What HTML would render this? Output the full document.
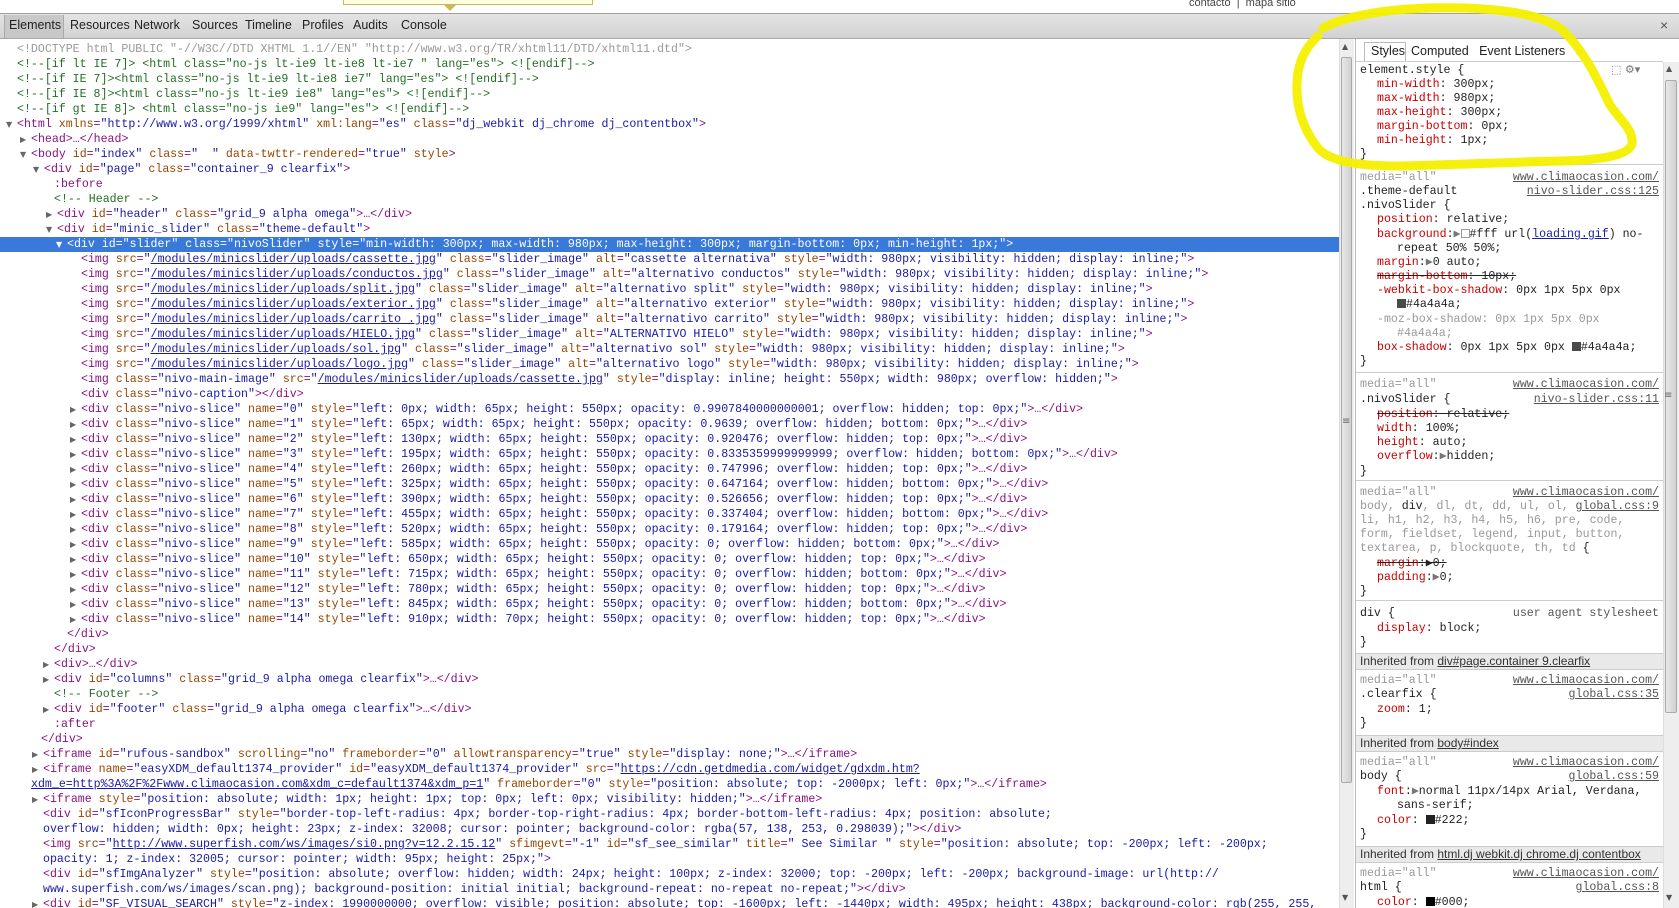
<!DOCTYPE html>
<html><head><meta charset="utf-8"><style>
*{margin:0;padding:0;box-sizing:border-box}
body{width:1679px;height:908px;overflow:hidden;background:#fff;position:relative;font-family:"Liberation Mono",monospace;font-size:11.6px;color:#222}
.abs{position:absolute}
.ln{position:absolute;white-space:pre;height:15px;line-height:15px}
.t{color:#881280}.a{color:#994500}.v{color:#1a1aa6}.c{color:#236e25}.g{color:#999}
.l{color:#1a1aa6;text-decoration:underline}
.ar{position:absolute;left:-11px;top:0;font-size:8px;color:#666;font-family:"DejaVu Sans",sans-serif}
.sel{background:#3879d9;color:#fff}
.sel span{color:#fff}
.tab{position:absolute;top:18px;font-family:"Liberation Sans",sans-serif;font-size:12.5px;color:#222}
#left{position:absolute;left:0;top:39px;width:1339px;height:869px;overflow:hidden}
#right{position:absolute;left:1355px;top:39px;width:308px;height:869px;overflow:hidden;border-left:1px solid #bbb}
.r{position:absolute;white-space:pre;line-height:14px;height:14px}
.p{color:#c80000}
.rl{position:absolute;right:4px;white-space:pre;color:#555;text-decoration:underline;line-height:14px}
.sep{position:absolute;left:0;right:0;height:1px;background:#ccc}
.inh{position:absolute;left:0;right:0;height:17px;background:#e9e9e9;border-top:1px solid #ccc;border-bottom:1px solid #ccc;font-family:"Liberation Sans",sans-serif;font-size:12px;line-height:15px;padding-left:4px;color:#333;white-space:pre}
.inh u{color:#333}
.s{text-decoration:line-through}
</style></head><body>
<div class="abs" style="left:343px;top:-2px;width:250px;height:7px;background:#ffffe0;border:1px solid #c9b95a"></div>
<div class="abs" style="left:444px;top:5px;width:0;height:0;border-left:6px solid transparent;border-right:6px solid transparent;border-top:6px solid #c9b95a"></div>
<div class="abs" style="left:1189px;top:-3px;font-family:'Liberation Sans',sans-serif;font-size:11px;color:#444;white-space:pre">contacto  |  mapa sitio</div>
<div class="abs" style="left:0;top:13px;width:1679px;height:26px;background:linear-gradient(#e4e4e4,#d2d2d2);border-top:1px solid #a0a0a0;border-bottom:1px solid #a8a8a8"></div>
<div class="abs" style="left:4px;top:15px;width:60px;height:23px;background:#c8c8c8;border-left:1px solid #aaa;border-right:1px solid #aaa"></div>
<div class="tab" style="left:9px">Elements</div>
<div class="tab" style="left:70px">Resources</div>
<div class="tab" style="left:134px">Network</div>
<div class="tab" style="left:192px">Sources</div>
<div class="tab" style="left:245px">Timeline</div>
<div class="tab" style="left:302px">Profiles</div>
<div class="tab" style="left:353px">Audits</div>
<div class="tab" style="left:401px">Console</div>
<div class="abs" style="left:1660px;top:17px;font-family:'Liberation Sans',sans-serif;font-size:14px;color:#555">×</div>

<div id="left">
<div class="ln g" style="left:17px;top:3px">&lt;!DOCTYPE html PUBLIC "-//W3C//DTD XHTML 1.1//EN" "http://www.w3.org/TR/xhtml11/DTD/xhtml11.dtd"&gt;</div>
<div class="ln c" style="left:17px;top:18px">&lt;!--[if lt IE 7]&gt; &lt;html class="no-js lt-ie9 lt-ie8 lt-ie7 " lang="es"&gt; &lt;![endif]--&gt;</div>
<div class="ln c" style="left:17px;top:33px">&lt;!--[if IE 7]&gt;&lt;html class="no-js lt-ie9 lt-ie8 ie7" lang="es"&gt; &lt;![endif]--&gt;</div>
<div class="ln c" style="left:17px;top:48px">&lt;!--[if IE 8]&gt;&lt;html class="no-js lt-ie9 ie8" lang="es"&gt; &lt;![endif]--&gt;</div>
<div class="ln c" style="left:17px;top:63px">&lt;!--[if gt IE 8]&gt; &lt;html class="no-js ie9" lang="es"&gt; &lt;![endif]--&gt;</div>
<div class="ln" style="left:17px;top:78px"><span class="ar">▼</span><span class="t">&lt;html </span><span class="a">xmlns</span><span class="t">=</span><span class="v">"http://www.w3.org/1999/xhtml"</span> <span class="a">xml:lang</span><span class="t">=</span><span class="v">"es"</span> <span class="a">class</span><span class="t">=</span><span class="v">"dj_webkit dj_chrome dj_contentbox"</span><span class="t">&gt;</span></div>
<div class="ln" style="left:31px;top:93px"><span class="ar">▶</span><span class="t">&lt;head&gt;…&lt;/head&gt;</span></div>
<div class="ln" style="left:31px;top:108px"><span class="ar">▼</span><span class="t">&lt;body </span><span class="a">id</span><span class="t">=</span><span class="v">"index"</span> <span class="a">class</span><span class="t">=</span><span class="v">"  "</span> <span class="a">data-twttr-rendered</span><span class="t">=</span><span class="v">"true"</span> <span class="a">style</span><span class="t">&gt;</span></div>
<div class="ln" style="left:44px;top:123px"><span class="ar">▼</span><span class="t">&lt;div </span><span class="a">id</span><span class="t">=</span><span class="v">"page"</span> <span class="a">class</span><span class="t">=</span><span class="v">"container_9 clearfix"</span><span class="t">&gt;</span></div>
<div class="ln t" style="left:54px;top:138px">:before</div>
<div class="ln c" style="left:54px;top:153px">&lt;!-- Header --&gt;</div>
<div class="ln" style="left:57px;top:168px"><span class="ar">▶</span><span class="t">&lt;div </span><span class="a">id</span><span class="t">=</span><span class="v">"header"</span> <span class="a">class</span><span class="t">=</span><span class="v">"grid_9 alpha omega"</span><span class="t">&gt;…&lt;/div&gt;</span></div>
<div class="ln" style="left:57px;top:183px"><span class="ar">▼</span><span class="t">&lt;div </span><span class="a">id</span><span class="t">=</span><span class="v">"minic_slider"</span> <span class="a">class</span><span class="t">=</span><span class="v">"theme-default"</span><span class="t">&gt;</span></div>
<div class="abs sel" style="left:0;top:198px;width:1339px;height:15px"></div>
<div class="ln sel" style="left:67px;top:198px"><span class="ar" style="color:#fff">▼</span>&lt;div id="slider" class="nivoSlider" style="min-width: 300px; max-width: 980px; max-height: 300px; margin-bottom: 0px; min-height: 1px;"&gt;</div>
<div class="ln" style="left:81px;top:213px"><span class="t">&lt;img </span><span class="a">src</span><span class="t">=</span><span class="v">"<span class="l">/modules/minicslider/uploads/cassette.jpg</span>"</span> <span class="a">class</span><span class="t">=</span><span class="v">"slider_image"</span> <span class="a">alt</span><span class="t">=</span><span class="v">"cassette alternativa"</span> <span class="a">style</span><span class="t">=</span><span class="v">"width: 980px; visibility: hidden; display: inline;"</span><span class="t">&gt;</span></div>
<div class="ln" style="left:81px;top:228px"><span class="t">&lt;img </span><span class="a">src</span><span class="t">=</span><span class="v">"<span class="l">/modules/minicslider/uploads/conductos.jpg</span>"</span> <span class="a">class</span><span class="t">=</span><span class="v">"slider_image"</span> <span class="a">alt</span><span class="t">=</span><span class="v">"alternativo conductos"</span> <span class="a">style</span><span class="t">=</span><span class="v">"width: 980px; visibility: hidden; display: inline;"</span><span class="t">&gt;</span></div>
<div class="ln" style="left:81px;top:243px"><span class="t">&lt;img </span><span class="a">src</span><span class="t">=</span><span class="v">"<span class="l">/modules/minicslider/uploads/split.jpg</span>"</span> <span class="a">class</span><span class="t">=</span><span class="v">"slider_image"</span> <span class="a">alt</span><span class="t">=</span><span class="v">"alternativo split"</span> <span class="a">style</span><span class="t">=</span><span class="v">"width: 980px; visibility: hidden; display: inline;"</span><span class="t">&gt;</span></div>
<div class="ln" style="left:81px;top:258px"><span class="t">&lt;img </span><span class="a">src</span><span class="t">=</span><span class="v">"<span class="l">/modules/minicslider/uploads/exterior.jpg</span>"</span> <span class="a">class</span><span class="t">=</span><span class="v">"slider_image"</span> <span class="a">alt</span><span class="t">=</span><span class="v">"alternativo exterior"</span> <span class="a">style</span><span class="t">=</span><span class="v">"width: 980px; visibility: hidden; display: inline;"</span><span class="t">&gt;</span></div>
<div class="ln" style="left:81px;top:273px"><span class="t">&lt;img </span><span class="a">src</span><span class="t">=</span><span class="v">"<span class="l">/modules/minicslider/uploads/carrito .jpg</span>"</span> <span class="a">class</span><span class="t">=</span><span class="v">"slider_image"</span> <span class="a">alt</span><span class="t">=</span><span class="v">"alternativo carrito"</span> <span class="a">style</span><span class="t">=</span><span class="v">"width: 980px; visibility: hidden; display: inline;"</span><span class="t">&gt;</span></div>
<div class="ln" style="left:81px;top:288px"><span class="t">&lt;img </span><span class="a">src</span><span class="t">=</span><span class="v">"<span class="l">/modules/minicslider/uploads/HIELO.jpg</span>"</span> <span class="a">class</span><span class="t">=</span><span class="v">"slider_image"</span> <span class="a">alt</span><span class="t">=</span><span class="v">"ALTERNATIVO HIELO"</span> <span class="a">style</span><span class="t">=</span><span class="v">"width: 980px; visibility: hidden; display: inline;"</span><span class="t">&gt;</span></div>
<div class="ln" style="left:81px;top:303px"><span class="t">&lt;img </span><span class="a">src</span><span class="t">=</span><span class="v">"<span class="l">/modules/minicslider/uploads/sol.jpg</span>"</span> <span class="a">class</span><span class="t">=</span><span class="v">"slider_image"</span> <span class="a">alt</span><span class="t">=</span><span class="v">"alternativo sol"</span> <span class="a">style</span><span class="t">=</span><span class="v">"width: 980px; visibility: hidden; display: inline;"</span><span class="t">&gt;</span></div>
<div class="ln" style="left:81px;top:318px"><span class="t">&lt;img </span><span class="a">src</span><span class="t">=</span><span class="v">"<span class="l">/modules/minicslider/uploads/logo.jpg</span>"</span> <span class="a">class</span><span class="t">=</span><span class="v">"slider_image"</span> <span class="a">alt</span><span class="t">=</span><span class="v">"alternativo logo"</span> <span class="a">style</span><span class="t">=</span><span class="v">"width: 980px; visibility: hidden; display: inline;"</span><span class="t">&gt;</span></div>
<div class="ln" style="left:81px;top:333px"><span class="t">&lt;img </span><span class="a">class</span><span class="t">=</span><span class="v">"nivo-main-image"</span> <span class="a">src</span><span class="t">=</span><span class="v">"<span class="l">/modules/minicslider/uploads/cassette.jpg</span>"</span> <span class="a">style</span><span class="t">=</span><span class="v">"display: inline; height: 550px; width: 980px; overflow: hidden;"</span><span class="t">&gt;</span></div>
<div class="ln" style="left:81px;top:348px"><span class="t">&lt;div </span><span class="a">class</span><span class="t">=</span><span class="v">"nivo-caption"</span><span class="t">&gt;&lt;/div&gt;</span></div>
<div class="ln" style="left:81px;top:363px"><span class="ar">▶</span><span class="t">&lt;div </span><span class="a">class</span><span class="t">=</span><span class="v">"nivo-slice"</span> <span class="a">name</span><span class="t">=</span><span class="v">"0"</span> <span class="a">style</span><span class="t">=</span><span class="v">"left: 0px; width: 65px; height: 550px; opacity: 0.9907840000000001; overflow: hidden; top: 0px;"</span><span class="t">&gt;…&lt;/div&gt;</span></div>
<div class="ln" style="left:81px;top:378px"><span class="ar">▶</span><span class="t">&lt;div </span><span class="a">class</span><span class="t">=</span><span class="v">"nivo-slice"</span> <span class="a">name</span><span class="t">=</span><span class="v">"1"</span> <span class="a">style</span><span class="t">=</span><span class="v">"left: 65px; width: 65px; height: 550px; opacity: 0.9639; overflow: hidden; bottom: 0px;"</span><span class="t">&gt;…&lt;/div&gt;</span></div>
<div class="ln" style="left:81px;top:393px"><span class="ar">▶</span><span class="t">&lt;div </span><span class="a">class</span><span class="t">=</span><span class="v">"nivo-slice"</span> <span class="a">name</span><span class="t">=</span><span class="v">"2"</span> <span class="a">style</span><span class="t">=</span><span class="v">"left: 130px; width: 65px; height: 550px; opacity: 0.920476; overflow: hidden; top: 0px;"</span><span class="t">&gt;…&lt;/div&gt;</span></div>
<div class="ln" style="left:81px;top:408px"><span class="ar">▶</span><span class="t">&lt;div </span><span class="a">class</span><span class="t">=</span><span class="v">"nivo-slice"</span> <span class="a">name</span><span class="t">=</span><span class="v">"3"</span> <span class="a">style</span><span class="t">=</span><span class="v">"left: 195px; width: 65px; height: 550px; opacity: 0.8335359999999999; overflow: hidden; bottom: 0px;"</span><span class="t">&gt;…&lt;/div&gt;</span></div>
<div class="ln" style="left:81px;top:423px"><span class="ar">▶</span><span class="t">&lt;div </span><span class="a">class</span><span class="t">=</span><span class="v">"nivo-slice"</span> <span class="a">name</span><span class="t">=</span><span class="v">"4"</span> <span class="a">style</span><span class="t">=</span><span class="v">"left: 260px; width: 65px; height: 550px; opacity: 0.747996; overflow: hidden; top: 0px;"</span><span class="t">&gt;…&lt;/div&gt;</span></div>
<div class="ln" style="left:81px;top:438px"><span class="ar">▶</span><span class="t">&lt;div </span><span class="a">class</span><span class="t">=</span><span class="v">"nivo-slice"</span> <span class="a">name</span><span class="t">=</span><span class="v">"5"</span> <span class="a">style</span><span class="t">=</span><span class="v">"left: 325px; width: 65px; height: 550px; opacity: 0.647164; overflow: hidden; bottom: 0px;"</span><span class="t">&gt;…&lt;/div&gt;</span></div>
<div class="ln" style="left:81px;top:453px"><span class="ar">▶</span><span class="t">&lt;div </span><span class="a">class</span><span class="t">=</span><span class="v">"nivo-slice"</span> <span class="a">name</span><span class="t">=</span><span class="v">"6"</span> <span class="a">style</span><span class="t">=</span><span class="v">"left: 390px; width: 65px; height: 550px; opacity: 0.526656; overflow: hidden; top: 0px;"</span><span class="t">&gt;…&lt;/div&gt;</span></div>
<div class="ln" style="left:81px;top:468px"><span class="ar">▶</span><span class="t">&lt;div </span><span class="a">class</span><span class="t">=</span><span class="v">"nivo-slice"</span> <span class="a">name</span><span class="t">=</span><span class="v">"7"</span> <span class="a">style</span><span class="t">=</span><span class="v">"left: 455px; width: 65px; height: 550px; opacity: 0.337404; overflow: hidden; bottom: 0px;"</span><span class="t">&gt;…&lt;/div&gt;</span></div>
<div class="ln" style="left:81px;top:483px"><span class="ar">▶</span><span class="t">&lt;div </span><span class="a">class</span><span class="t">=</span><span class="v">"nivo-slice"</span> <span class="a">name</span><span class="t">=</span><span class="v">"8"</span> <span class="a">style</span><span class="t">=</span><span class="v">"left: 520px; width: 65px; height: 550px; opacity: 0.179164; overflow: hidden; top: 0px;"</span><span class="t">&gt;…&lt;/div&gt;</span></div>
<div class="ln" style="left:81px;top:498px"><span class="ar">▶</span><span class="t">&lt;div </span><span class="a">class</span><span class="t">=</span><span class="v">"nivo-slice"</span> <span class="a">name</span><span class="t">=</span><span class="v">"9"</span> <span class="a">style</span><span class="t">=</span><span class="v">"left: 585px; width: 65px; height: 550px; opacity: 0; overflow: hidden; bottom: 0px;"</span><span class="t">&gt;…&lt;/div&gt;</span></div>
<div class="ln" style="left:81px;top:513px"><span class="ar">▶</span><span class="t">&lt;div </span><span class="a">class</span><span class="t">=</span><span class="v">"nivo-slice"</span> <span class="a">name</span><span class="t">=</span><span class="v">"10"</span> <span class="a">style</span><span class="t">=</span><span class="v">"left: 650px; width: 65px; height: 550px; opacity: 0; overflow: hidden; top: 0px;"</span><span class="t">&gt;…&lt;/div&gt;</span></div>
<div class="ln" style="left:81px;top:528px"><span class="ar">▶</span><span class="t">&lt;div </span><span class="a">class</span><span class="t">=</span><span class="v">"nivo-slice"</span> <span class="a">name</span><span class="t">=</span><span class="v">"11"</span> <span class="a">style</span><span class="t">=</span><span class="v">"left: 715px; width: 65px; height: 550px; opacity: 0; overflow: hidden; bottom: 0px;"</span><span class="t">&gt;…&lt;/div&gt;</span></div>
<div class="ln" style="left:81px;top:543px"><span class="ar">▶</span><span class="t">&lt;div </span><span class="a">class</span><span class="t">=</span><span class="v">"nivo-slice"</span> <span class="a">name</span><span class="t">=</span><span class="v">"12"</span> <span class="a">style</span><span class="t">=</span><span class="v">"left: 780px; width: 65px; height: 550px; opacity: 0; overflow: hidden; top: 0px;"</span><span class="t">&gt;…&lt;/div&gt;</span></div>
<div class="ln" style="left:81px;top:558px"><span class="ar">▶</span><span class="t">&lt;div </span><span class="a">class</span><span class="t">=</span><span class="v">"nivo-slice"</span> <span class="a">name</span><span class="t">=</span><span class="v">"13"</span> <span class="a">style</span><span class="t">=</span><span class="v">"left: 845px; width: 65px; height: 550px; opacity: 0; overflow: hidden; bottom: 0px;"</span><span class="t">&gt;…&lt;/div&gt;</span></div>
<div class="ln" style="left:81px;top:573px"><span class="ar">▶</span><span class="t">&lt;div </span><span class="a">class</span><span class="t">=</span><span class="v">"nivo-slice"</span> <span class="a">name</span><span class="t">=</span><span class="v">"14"</span> <span class="a">style</span><span class="t">=</span><span class="v">"left: 910px; width: 70px; height: 550px; opacity: 0; overflow: hidden; top: 0px;"</span><span class="t">&gt;…&lt;/div&gt;</span></div>
<div class="ln t" style="left:67px;top:588px">&lt;/div&gt;</div>
<div class="ln t" style="left:54px;top:603px">&lt;/div&gt;</div>
<div class="ln" style="left:54px;top:618px"><span class="ar">▶</span><span class="t">&lt;div&gt;…&lt;/div&gt;</span></div>
<div class="ln" style="left:54px;top:633px"><span class="ar">▶</span><span class="t">&lt;div </span><span class="a">id</span><span class="t">=</span><span class="v">"columns"</span> <span class="a">class</span><span class="t">=</span><span class="v">"grid_9 alpha omega clearfix"</span><span class="t">&gt;…&lt;/div&gt;</span></div>
<div class="ln c" style="left:54px;top:648px">&lt;!-- Footer --&gt;</div>
<div class="ln" style="left:54px;top:663px"><span class="ar">▶</span><span class="t">&lt;div </span><span class="a">id</span><span class="t">=</span><span class="v">"footer"</span> <span class="a">class</span><span class="t">=</span><span class="v">"grid_9 alpha omega clearfix"</span><span class="t">&gt;…&lt;/div&gt;</span></div>
<div class="ln t" style="left:54px;top:678px">:after</div>
<div class="ln t" style="left:41px;top:693px">&lt;/div&gt;</div>
<div class="ln" style="left:43px;top:708px"><span class="ar">▶</span><span class="t">&lt;iframe </span><span class="a">id</span><span class="t">=</span><span class="v">"rufous-sandbox"</span> <span class="a">scrolling</span><span class="t">=</span><span class="v">"no"</span> <span class="a">frameborder</span><span class="t">=</span><span class="v">"0"</span> <span class="a">allowtransparency</span><span class="t">=</span><span class="v">"true"</span> <span class="a">style</span><span class="t">=</span><span class="v">"display: none;"</span><span class="t">&gt;…&lt;/iframe&gt;</span></div>
<div class="ln" style="left:43px;top:723px"><span class="ar">▶</span><span class="t">&lt;iframe </span><span class="a">name</span><span class="t">=</span><span class="v">"easyXDM_default1374_provider"</span> <span class="a">id</span><span class="t">=</span><span class="v">"easyXDM_default1374_provider"</span> <span class="a">src</span><span class="t">=</span><span class="v">"<span class="l">https://cdn.getdmedia.com/widget/gdxdm.htm?</span></span></div>
<div class="ln" style="left:31px;top:738px"><span class="l">xdm_e=http%3A%2F%2Fwww.climaocasion.com&amp;xdm_c=default1374&amp;xdm_p=1</span><span class="v">"</span> <span class="a">frameborder</span><span class="t">=</span><span class="v">"0"</span> <span class="a">style</span><span class="t">=</span><span class="v">"position: absolute; top: -2000px; left: 0px;"</span><span class="t">&gt;…&lt;/iframe&gt;</span></div>
<div class="ln" style="left:43px;top:753px"><span class="ar">▶</span><span class="t">&lt;iframe </span><span class="a">style</span><span class="t">=</span><span class="v">"position: absolute; width: 1px; height: 1px; top: 0px; left: 0px; visibility: hidden;"</span><span class="t">&gt;…&lt;/iframe&gt;</span></div>
<div class="ln" style="left:43px;top:768px"><span class="t">&lt;div </span><span class="a">id</span><span class="t">=</span><span class="v">"sfIconProgressBar"</span> <span class="a">style</span><span class="t">=</span><span class="v">"border-top-left-radius: 4px; border-top-right-radius: 4px; border-bottom-left-radius: 4px; position: absolute;</span></div>
<div class="ln v" style="left:43px;top:783px">overflow: hidden; width: 0px; height: 23px; z-index: 32008; cursor: pointer; background-color: rgba(57, 138, 253, 0.298039);"<span class="t">&gt;&lt;/div&gt;</span></div>
<div class="ln" style="left:43px;top:798px"><span class="t">&lt;img </span><span class="a">src</span><span class="t">=</span><span class="v">"<span class="l">http://www.superfish.com/ws/images/si0.png?v=12.2.15.12</span>"</span> <span class="a">sfimgevt</span><span class="t">=</span><span class="v">"-1"</span> <span class="a">id</span><span class="t">=</span><span class="v">"sf_see_similar"</span> <span class="a">title</span><span class="t">=</span><span class="v">" See Similar "</span> <span class="a">style</span><span class="t">=</span><span class="v">"position: absolute; top: -200px; left: -200px;</span></div>
<div class="ln v" style="left:43px;top:813px">opacity: 1; z-index: 32005; cursor: pointer; width: 95px; height: 25px;"<span class="t">&gt;</span></div>
<div class="ln" style="left:43px;top:828px"><span class="t">&lt;div </span><span class="a">id</span><span class="t">=</span><span class="v">"sfImgAnalyzer"</span> <span class="a">style</span><span class="t">=</span><span class="v">"position: absolute; overflow: hidden; width: 24px; height: 100px; z-index: 32000; top: -200px; left: -200px; background-image: url(http://</span></div>
<div class="ln v" style="left:43px;top:843px">www.superfish.com/ws/images/scan.png); background-position: initial initial; background-repeat: no-repeat no-repeat;"<span class="t">&gt;&lt;/div&gt;</span></div>
<div class="ln" style="left:43px;top:858px"><span class="ar">▶</span><span class="t">&lt;div </span><span class="a">id</span><span class="t">=</span><span class="v">"SF_VISUAL_SEARCH"</span> <span class="a">style</span><span class="t">=</span><span class="v">"z-index: 1990000000; overflow: visible; position: absolute; top: -1600px; left: -1440px; width: 495px; height: 438px; background-color: rgb(255, 255,</span></div>
</div>

<div class="abs" style="left:1339px;top:39px;width:15px;height:869px;background:#eee;border-left:1px solid #ddd"></div>
<div class="abs" style="left:1341px;top:57px;width:11px;height:726px;background:linear-gradient(90deg,#e8e8e8,#d0d0d0);border:1px solid #aaa;border-radius:2px"></div>
<div class="abs" style="left:1342px;top:42px;font-size:8px;color:#555;font-family:'DejaVu Sans',sans-serif">▲</div>
<div class="abs" style="left:1342px;top:893px;font-size:8px;color:#555;font-family:'DejaVu Sans',sans-serif">▼</div>
<div class="abs" style="left:1342px;top:416px;font-size:10px;color:#666;font-family:'DejaVu Sans',sans-serif">≡</div>

<div id="right">
<div class="abs" style="left:8px;top:3px;width:42px;height:20px;border:1px solid #bbb;border-bottom:none;background:#fff"></div>
<div class="abs" style="left:0;top:22px;width:308px;height:1px;background:#ccc"></div>
<div class="abs" style="left:15px;top:5px;font-family:'Liberation Sans',sans-serif;font-size:12.5px;white-space:pre">Styles  </div>
<div class="abs" style="left:55px;top:5px;font-family:'Liberation Sans',sans-serif;font-size:12.5px;white-space:pre">Computed   Event Listeners   <span style="color:#999">»</span></div>
<div class="abs" style="left:255px;top:24px;font-size:11px;color:#777;font-family:'DejaVu Sans',sans-serif">⬚ ⚙▾</div>
<div class="r" style="left:4px;top:25px">element.style {</div>
<div class="r" style="left:21px;top:39px"><span class="p">min-width</span>: 300px;</div>
<div class="r" style="left:21px;top:53px"><span class="p">max-width</span>: 980px;</div>
<div class="r" style="left:21px;top:67px"><span class="p">max-height</span>: 300px;</div>
<div class="r" style="left:21px;top:81px"><span class="p">margin-bottom</span>: 0px;</div>
<div class="r" style="left:21px;top:95px"><span class="p">min-height</span>: 1px;</div>
<div class="r" style="left:4px;top:109px">}</div>
<div class="sep" style="top:125px"></div>
<div class="r g" style="left:4px;top:132px">media="all"</div><div class="rl" style="top:132px">www.climaocasion.com/</div>
<div class="r" style="left:4px;top:146px">.theme-default</div><div class="rl" style="top:146px">nivo-slider.css:125</div>
<div class="r" style="left:4px;top:160px">.nivoSlider {</div>
<div class="r" style="left:21px;top:174px"><span class="p">position</span>: relative;</div>
<div class="r" style="left:21px;top:189px"><span class="p">background</span>:<span style="color:#777">▶</span><span style="display:inline-block;width:9px;height:9px;border:1px solid #999;vertical-align:-1px"></span>#fff url(<span class="l">loading.gif</span>) no-</div>
<div class="r" style="left:41px;top:203px">repeat 50% 50%;</div>
<div class="r" style="left:21px;top:217px"><span class="p">margin</span>:<span style="color:#777">▶</span>0 auto;</div>
<div class="r s" style="left:21px;top:231px"><span class="p">margin-bottom</span>: 10px;</div>
<div class="r" style="left:21px;top:245px"><span class="p">-webkit-box-shadow</span>: 0px 1px 5px 0px</div>
<div class="r" style="left:41px;top:259px"><span style="display:inline-block;width:9px;height:9px;background:#4a4a4a;vertical-align:-1px"></span>#4a4a4a;</div>
<div class="r g" style="left:21px;top:274px">-moz-box-shadow: 0px 1px 5px 0px</div>
<div class="r g" style="left:41px;top:288px">#4a4a4a;</div>
<div class="r" style="left:21px;top:302px"><span class="p">box-shadow</span>: 0px 1px 5px 0px <span style="display:inline-block;width:9px;height:9px;background:#4a4a4a;vertical-align:-1px"></span>#4a4a4a;</div>
<div class="r" style="left:4px;top:316px">}</div>
<div class="sep" style="top:333px"></div>
<div class="r g" style="left:4px;top:339px">media="all"</div><div class="rl" style="top:339px">www.climaocasion.com/</div>
<div class="r" style="left:4px;top:354px">.nivoSlider {</div><div class="rl" style="top:354px">nivo-slider.css:11</div>
<div class="r s" style="left:21px;top:369px"><span class="p">position</span>: relative;</div>
<div class="r" style="left:21px;top:383px"><span class="p">width</span>: 100%;</div>
<div class="r" style="left:21px;top:397px"><span class="p">height</span>: auto;</div>
<div class="r" style="left:21px;top:411px"><span class="p">overflow</span>:<span style="color:#777">▶</span>hidden;</div>
<div class="r" style="left:4px;top:426px">}</div>
<div class="sep" style="top:441px"></div>
<div class="r g" style="left:4px;top:447px">media="all"</div><div class="rl" style="top:447px">www.climaocasion.com/</div>
<div class="r g" style="left:4px;top:461px">body, <span style="color:#222">div</span>, dl, dt, dd, ul, ol,</div><div class="rl" style="top:461px">global.css:9</div>
<div class="r g" style="left:4px;top:475px">li, h1, h2, h3, h4, h5, h6, pre, code,</div>
<div class="r g" style="left:4px;top:489px">form, fieldset, legend, input, button,</div>
<div class="r g" style="left:4px;top:503px">textarea, p, blockquote, th, td <span style="color:#222">{</span></div>
<div class="r s" style="left:21px;top:518px"><span class="p">margin</span>:▶0;</div>
<div class="r" style="left:21px;top:532px"><span class="p">padding</span>:<span style="color:#777">▶</span>0;</div>
<div class="r" style="left:4px;top:546px">}</div>
<div class="sep" style="top:561px"></div>
<div class="r" style="left:4px;top:568px">div {</div><div class="rl" style="top:568px;text-decoration:none">user agent stylesheet</div>
<div class="r" style="left:21px;top:583px"><span class="p">display</span>: block;</div>
<div class="r" style="left:4px;top:597px">}</div>
<div class="inh" style="top:614px">Inherited from <u>div#page.container 9.clearfix</u></div>
<div class="r g" style="left:4px;top:635px">media="all"</div><div class="rl" style="top:635px">www.climaocasion.com/</div>
<div class="r" style="left:4px;top:649px">.clearfix {</div><div class="rl" style="top:649px">global.css:35</div>
<div class="r" style="left:21px;top:664px"><span class="p">zoom</span>: 1;</div>
<div class="r" style="left:4px;top:678px">}</div>
<div class="inh" style="top:696px">Inherited from <u>body#index</u></div>
<div class="r g" style="left:4px;top:717px">media="all"</div><div class="rl" style="top:717px">www.climaocasion.com/</div>
<div class="r" style="left:4px;top:731px">body {</div><div class="rl" style="top:731px">global.css:59</div>
<div class="r" style="left:21px;top:746px"><span class="p">font</span>:<span style="color:#777">▶</span>normal 11px/14px Arial, Verdana,</div>
<div class="r" style="left:41px;top:760px">sans-serif;</div>
<div class="r" style="left:21px;top:775px"><span class="p">color</span>: <span style="display:inline-block;width:9px;height:9px;background:#222;vertical-align:-1px"></span>#222;</div>
<div class="r" style="left:4px;top:789px">}</div>
<div class="inh" style="top:807px">Inherited from <u>html.dj webkit.dj chrome.dj contentbox</u></div>
<div class="r g" style="left:4px;top:828px">media="all"</div><div class="rl" style="top:828px">www.climaocasion.com/</div>
<div class="r" style="left:4px;top:842px">html {</div><div class="rl" style="top:842px">global.css:8</div>
<div class="r" style="left:21px;top:857px"><span class="p">color</span>: <span style="display:inline-block;width:9px;height:9px;background:#000;vertical-align:-1px"></span>#000;</div>
</div>

<div class="abs" style="left:1663px;top:62px;width:16px;height:846px;background:#eee;border-left:1px solid #ddd"></div>
<div class="abs" style="left:1665px;top:80px;width:12px;height:633px;background:linear-gradient(90deg,#e8e8e8,#d0d0d0);border:1px solid #aaa;border-radius:2px"></div>
<div class="abs" style="left:1666px;top:64px;font-size:8px;color:#555;font-family:'DejaVu Sans',sans-serif">▲</div>
<div class="abs" style="left:1666px;top:893px;font-size:8px;color:#555;font-family:'DejaVu Sans',sans-serif">▼</div>
<div class="abs" style="left:1664px;top:390px;font-size:10px;color:#666;font-family:'DejaVu Sans',sans-serif">≡</div>

<svg class="abs" style="left:0;top:0" width="1679" height="908">
<path d="M1323 28 C1350 14 1400 6 1467 8 C1510 10 1540 15 1560 28 C1585 50 1600 85 1610 105 C1620 120 1634 130 1632 144 C1628 156 1600 160 1560 161 C1510 162 1450 165 1400 166 C1360 166 1330 162 1318 148 C1302 128 1296 105 1297 82 C1298 62 1305 48 1318 36" fill="none" stroke="#f4f000" stroke-width="9" stroke-linecap="round" stroke-linejoin="round" opacity="0.95"/>
</svg>
</body></html>
